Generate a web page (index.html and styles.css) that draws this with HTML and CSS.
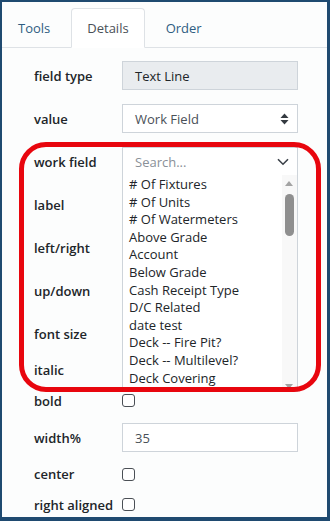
FILE: index.html
```html
<!DOCTYPE html>
<html lang="en">
<head>
    <meta charset="UTF-8">
    <meta name="viewport" content="width=device-width, initial-scale=1.0">
    <title>Field Details</title>
    <link rel="stylesheet" href="styles.css">
</head>
<body>
    <div class="frame">
        <div class="tabs">
            <div class="tab">Tools</div>
            <div class="tab active">Details</div>
            <div class="tab">Order</div>
        </div>

        <div class="content">
            <div class="row">
                <div class="lbl">field type</div>
                <div class="ctl readonly">Text Line</div>
            </div>
            <div class="row">
                <div class="lbl">value</div>
                <div class="ctl select">
                    <span class="muted">Work Field</span>
                    <svg class="sort" width="9" height="12" viewBox="0 0 9 12">
                        <path d="M4.5 0.5 L8.5 5 L0.5 5 Z" fill="#343a40"/>
                        <path d="M4.5 11.5 L8.5 7 L0.5 7 Z" fill="#343a40"/>
                    </svg>
                </div>
            </div>
            <div class="row work">
                <div class="lbl">work field</div>
                <div class="ctl select">
                    <span class="placeholder">Search...</span>
                    <svg class="chev" width="12" height="8" viewBox="0 0 12 8">
                        <path d="M1 1.2 L6 6.2 L11 1.2" fill="none" stroke="#3a4048" stroke-width="1.6"/>
                    </svg>
                </div>
                <div class="dropdown">
                    <div class="items">
                        <div class="item"># Of Fixtures</div>
                        <div class="item"># Of Units</div>
                        <div class="item"># Of Watermeters</div>
                        <div class="item">Above Grade</div>
                        <div class="item">Account</div>
                        <div class="item">Below Grade</div>
                        <div class="item">Cash Receipt Type</div>
                        <div class="item">D/C Related</div>
                        <div class="item">date test</div>
                        <div class="item">Deck -- Fire Pit?</div>
                        <div class="item">Deck -- Multilevel?</div>
                        <div class="item">Deck Covering</div>
                    </div>
                    <div class="scrollbar">
                        <div class="arrow up"></div>
                        <div class="thumb"></div>
                        <div class="arrow down"></div>
                    </div>
                </div>
            </div>
            <div class="row">
                <div class="lbl">label</div>
                <div class="ctl"></div>
            </div>
            <div class="row">
                <div class="lbl">left/right</div>
                <div class="ctl"></div>
            </div>
            <div class="row">
                <div class="lbl">up/down</div>
                <div class="ctl"></div>
            </div>
            <div class="row">
                <div class="lbl">font size</div>
                <div class="ctl"></div>
            </div>
            <div class="row check">
                <div class="lbl">italic</div>
                <span class="box"></span>
            </div>
            <div class="row check">
                <div class="lbl">bold</div>
                <span class="box"></span>
            </div>
            <div class="row">
                <div class="lbl">width%</div>
                <div class="ctl muted">35</div>
            </div>
            <div class="row check">
                <div class="lbl">center</div>
                <span class="box"></span>
            </div>
            <div class="row check">
                <div class="lbl">right aligned</div>
                <span class="box"></span>
            </div>
        </div>

        <!-- annotation around the open work field list -->
        <div class="callout"></div>
    </div>
</body>
</html>
```

FILE: styles.css
```css
* { box-sizing: border-box; }
body { margin: 0; font-family: "Open Sans", Arial, sans-serif; font-size: 13px; color: #212529; }

.frame {
    position: relative; height: 521px; overflow: hidden;
    border-style: solid; border-color: #1f4a70;
    border-width: 2px 3px 4px 2px;
    background: #fcfdfd;
}

.tabs { display: flex; padding: 6px 0 0 0; border-bottom: 1px solid #dee2e6; height: 46px; }
.tab {
    height: 40px; line-height: 38px; padding: 0 15px; margin-right: 5px;
    border: 1px solid transparent; border-radius: 4px 4px 0 0;
    color: #2e5d82;
}
.tab.active { color: #495057; background: #fff; border-color: #dee2e6 #dee2e6 #fff; }

.content { padding: 13px 29px 0 32px; }
.row { position: relative; display: flex; align-items: center; margin-bottom: 14px; }
.row.check { height: 16.5px; }
.lbl { width: 88px; flex: none; font-weight: 600; }

.ctl {
    width: 176px; height: 29px; padding: 0 12px;
    border: 1px solid #ced4da; background: #fff;
    display: flex; align-items: center; justify-content: space-between;
}
.ctl.readonly { background: #e9ecef; }
.muted { color: #495057; }
.placeholder { color: #8a9098; }
.sort { margin-right: -4px; }
.chev { margin-right: -4px; margin-top: 1px; }

.box { width: 13px; height: 13px; border: 1px solid #4a4f55; border-radius: 3px; background: #fff; }

.dropdown {
    position: absolute; left: 88px; top: 28px; z-index: 2;
    width: 176px; height: 217px; display: flex;
    border: 1px solid #ced4da; border-top: none; background: #fff;
}
.items { flex: 1; overflow: hidden; padding: 1px 0 0 6px; }
.item { height: 17.6px; line-height: 17.6px; white-space: nowrap; }

.scrollbar { width: 15px; background: #f8f8f8; position: relative; }
.arrow { position: absolute; left: 3px; width: 0; height: 0; border-left: 4.5px solid transparent; border-right: 4.5px solid transparent; }
.arrow.up { top: 6px; border-bottom: 5px solid #a3a3a3; }
.arrow.down { bottom: 2px; border-top: 5px solid #a3a3a3; }
.thumb { position: absolute; left: 3px; top: 19px; width: 9px; height: 42px; border-radius: 5px; background: #8f8f8f; }

.callout {
    position: absolute; left: 17px; top: 140px; width: 302px; height: 250px;
    border: 5px solid #e8060e; border-radius: 27px; z-index: 3;
}
```
